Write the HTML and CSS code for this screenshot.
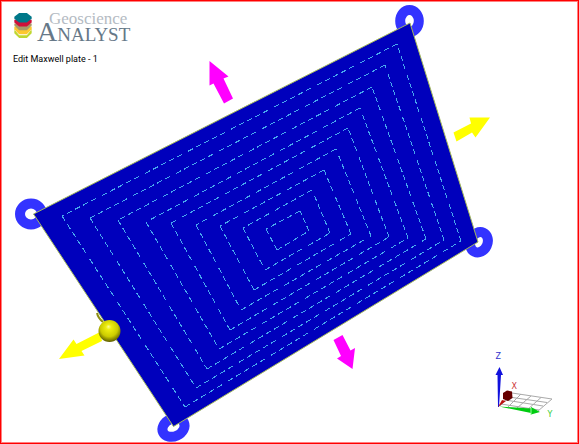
FILE: index.html
```html
<!DOCTYPE html>
<html lang="en">
<head>
<meta charset="utf-8">
<title>Geoscience ANALYST</title>
<link rel="stylesheet" href="styles.css">
</head>
<body>
<main class="viewport">
  <svg class="scene" viewBox="0 0 577 442" role="img" aria-label="Maxwell plate">
    <defs>
      <radialGradient id="ball" cx="0.5" cy="0.4" r="0.6" fx="0.45" fy="0.3">
        <stop offset="0" stop-color="#fbfb9a"/>
        <stop offset="0.2" stop-color="#eeee10"/>
        <stop offset="0.65" stop-color="#cccc00"/>
        <stop offset="1" stop-color="#5c5c00"/>
      </radialGradient>
    </defs>
    <g transform="translate(-1 -1)">
      <g class="ring">
        <ellipse cx="31" cy="214" rx="11" ry="10.500"/>
        <ellipse cx="409.500" cy="21" rx="9.300" ry="11"/>
        <ellipse cx="479" cy="242.300" rx="8.500" ry="10.500" transform="rotate(25 479 242.300)"/>
        <ellipse cx="173.500" cy="427.500" rx="11.500" ry="8.800" transform="rotate(-25 173.500 427.500)"/>
      </g>
      <path class="plate" d="M33.500 214 410 23 478 242 173.500 426.500Z"/>
      <path class="plate-edge" d="M33.500 214 410 23 478 242 173.500 426.500Z"/>
      <g id="contours" class="contours"></g>
      <g class="arrow-magenta">
        <path d="M209.500 61 228.500 76.500 223.500 78.500 233 98.500 224 103.500 213.500 83.500 209.500 85.500Z"/>
        <path d="M352.500 369 337 358.500 341 356 333.500 340 342.500 335 350.500 350.500 355 348Z"/>
      </g>
      <g class="arrow-yellow">
        <path d="M490 117.500 475.500 137.500 472 132.500 456.500 141.500 453.500 132.500 471 123.500 469.500 117.500Z"/>
        <path d="M59 359 73.500 339.500 76.500 344 100 332 102 341 81.500 351 84.500 355.500Z"/>
      </g>
      <path class="ball-tail" d="M97 313Q98 318 103 322"/>
      <circle cx="109.500" cy="331" r="11" fill="url(#ball)"/>
      <g class="grid">
        <path d="M512 393 552 399M509 397 547 402.500M505 400 543 406M501 404 539 410M512 393 500 406M521 394 508 407M531 396 517 408M541 397.500 527 410M552 399 538 411"/>
      </g>
      <path class="axis-y" d="M499 406.500 531 408.500V407L540 412 531 414.500V413Z"/>
      <path class="axis-y-tip" d="M531 408V415"/>
      <path class="axis-z" d="M498 407 497.500 375H495.500L499.500 367 503 375H501L499 407Z"/>
      <path class="axis-x" d="M498 407 502 400 506 401Z"/>
      <path class="axis-x-head" d="M503 393 507 390.500 512 391.500 512.500 398 508 401 503 399Z"/>
      <text class="label label-z" x="495.500" y="359">Z</text>
      <text class="label label-x" x="511.500" y="389">X</text>
      <text class="label label-y" x="547.500" y="417">Y</text>
    </g>
  </svg>
  <header class="overlay">
    <div class="brand">
      <svg class="mark" viewBox="0 0 20 28" aria-hidden="true">
        <path fill="#bfd730" d="M1 19H19V22L14 27H6L1 22Z"/>
        <path fill="#fff" d="M1 18H19L14 24H6Z"/>
        <path fill="#fdc82f" d="M1 15H19V18L14 23H6L1 18Z"/>
        <path fill="#a89968" d="M1 12H19V14L14 19H6L1 14Z"/>
        <path fill="#d0103a" d="M1 8H19V11L14 15H6L1 11Z"/>
        <path fill="#007889" d="M6 1H14L19 5V7L14 11H6L1 7V5Z"/>
      </svg>
      <div class="wordmark">
        <span class="word-top">Geoscience</span>
        <span class="word-main"><span class="initial">A</span>NALYST</span>
      </div>
    </div>
    <p class="mode">Edit Maxwell plate - 1</p>
  </header>
</main>
<script src="contours.js"></script>
</body>
</html>
```
FILE: contours.js
```js
// Corners of each contour in order: left, bottom, right, top.
const contours = [
  [[62, 216], [185, 407], [461, 241], [397, 44]],
  [[90, 218], [196, 388], [444, 240], [385, 65]],
  [[118, 220], [207, 369], [426, 239], [372, 87]],
  [[146, 222], [219, 349], [408, 238], [360, 108]],
  [[171, 223], [230, 330], [389, 237], [348, 128]],
  [[196, 225], [241, 310], [371, 236], [336, 149]],
  [[220, 226], [254, 290], [351, 234], [324, 170]],
  [[243, 228], [265, 270], [330, 233], [312, 190]],
  [[266, 229], [277, 250], [309, 231], [300, 211]]
];
const group = document.getElementById("contours");
for (const corners of contours) {
  corners.forEach(([x1, y1], i) => {
    const [x2, y2] = corners[(i + 1) % 4];
    const line = document.createElementNS("http://www.w3.org/2000/svg", "path");
    line.setAttribute("d", `M${x1} ${y1}L${x2} ${y2}`);
    // Dashes are measured along the longer axis of each edge.
    line.setAttribute("pathLength", Math.max(Math.abs(x2 - x1), Math.abs(y2 - y1)));
    group.append(line);
  });
}
```
FILE: styles.css
```css
* { box-sizing: border-box; }
body { margin: 0; background: #fff; }
.viewport {
  position: relative;
  height: 100vh;
  border: 1px solid #f00;
  box-shadow: inset 0 0 0 1px #ff8080;
  overflow: hidden;
}
.scene { display: block; width: 100%; height: 100%; }
.ring { fill: none; stroke: #3333ff; stroke-width: 10; }
.plate { fill: #0000bc; }
.plate-edge { fill: none; stroke: #a3b85c; stroke-width: 1; }
.contours {
  fill: none;
  stroke: #48a8ee;
  stroke-width: 1;
  stroke-dasharray: 5 3 5 3 5 3 5 3 5 6;
  shape-rendering: crispEdges;
}
.arrow-magenta { fill: #f0f; }
.arrow-yellow { fill: #ff0; }
.ball-tail { fill: none; stroke: #8c8c10; stroke-width: 2; }
.grid { fill: none; stroke: #aaa; stroke-width: 1; }
.axis-y { fill: #0c1; }
.axis-y-tip { stroke: #9f9; stroke-width: 1; }
.axis-z { fill: #11d; }
.axis-x { fill: #b11; }
.axis-x-head { fill: #600; }
.label { font: 8px "DejaVu Sans", sans-serif; }
.label-z { fill: #33c; }
.label-x { fill: #c33; }
.label-y { fill: #3c3; }
.overlay { position: absolute; top: 10px; left: 12px; }
.brand { display: flex; gap: 4px; }
.mark { width: 20px; height: 28px; padding-top: 1px; }
.wordmark { display: flex; flex-direction: column; font-family: "Liberation Serif", serif; }
.word-top { padding-left: 12px; font-size: 17px; line-height: 16px; color: #b4bbc3; }
.word-main { font-size: 19px; line-height: 10px; color: #667888; }
.initial { font-size: 28px; line-height: 10px; }
.mode { margin: 12px 0 0; font: 9px/14px Roboto, sans-serif; color: #000; }
```
